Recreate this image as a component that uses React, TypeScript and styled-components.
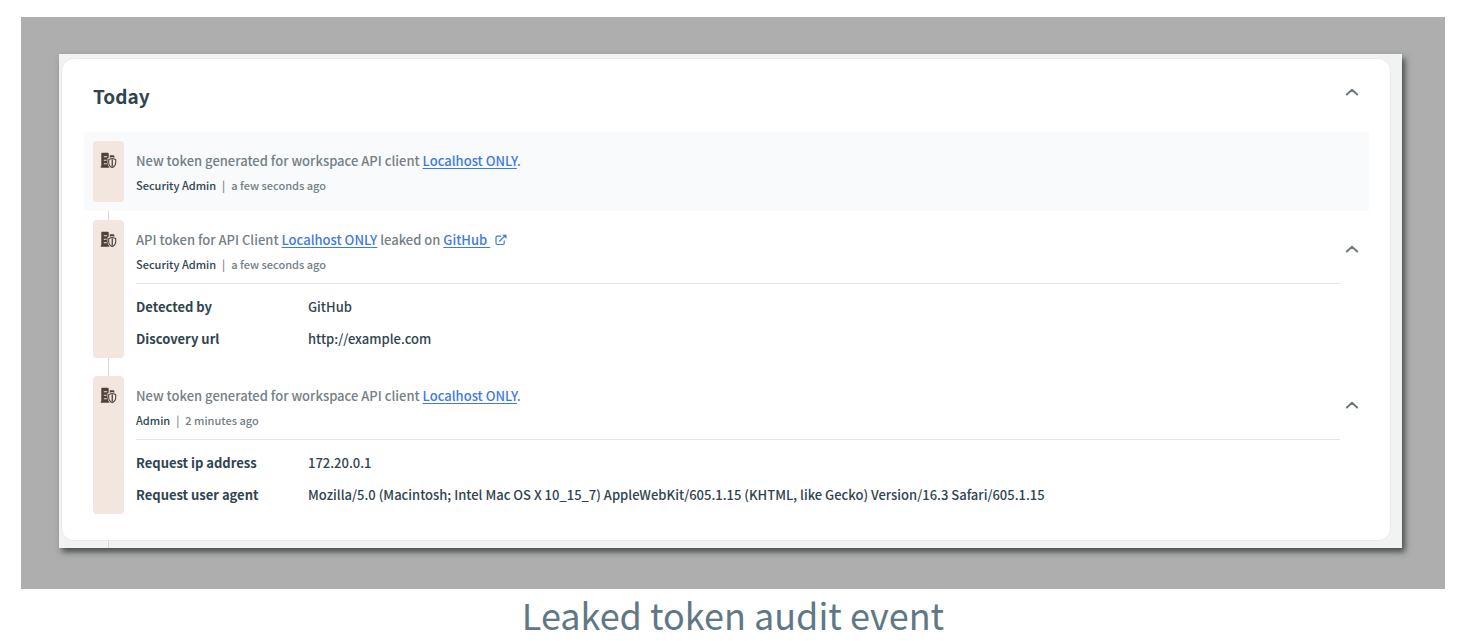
import React from "react";
import styled, { createGlobalStyle } from "styled-components";

const GlobalStyle = createGlobalStyle`
  *, *::before, *::after { box-sizing: border-box; }
  body {
    margin: 0;
    background: #fff;
    color: #2f444e;
    font-family: "Noto Sans CJK SC", "Noto Sans", sans-serif;
  }
`;

const Figure = styled.figure`
  margin: 0;
  padding: 17px 17px 0 21px;
`;

const Backdrop = styled.div`
  background: #aeaeae;
  padding: 37px 43px 41px 38px;
`;

const Panel = styled.div`
  background: #f1f3f3;
  padding: 5px 12px 0 3px;
  box-shadow: 3px 4px 6px rgba(40, 44, 44, 0.75);
`;

const Card = styled.section`
  background: #fff;
  border-radius: 12px;
  padding: 0 21px 17px 22px;
  box-shadow: 0 0 0 1px #e9ebec;
`;

const CardHeader = styled.header`
  display: flex;
  justify-content: space-between;
  align-items: center;
  height: 73px;
  padding: 0 5px 0 9px;
`;

const Heading = styled.h2`
  margin: 0;
  font-size: 19px;
  line-height: 28px;
  font-weight: 700;
`;

const IconButton = styled.button`
  display: flex;
  align-items: center;
  justify-content: center;
  width: 24px;
  height: 24px;
  flex: none;
  padding: 0;
  border: 0;
  background: none;
  color: #6f797d;
  cursor: pointer;
`;

const HeaderToggle = styled(IconButton)`
  margin-bottom: 7px;
`;

const RowToggle = styled(IconButton)`
  margin-top: 26px;
`;

const Events = styled.ol`
  list-style: none;
  margin: 0;
  padding: 0;
`;

const Row = styled.li<{ $active?: boolean }>`
  display: flex;
  padding: 0 5px 0 9px;
  background: ${(p) => (p.$active ? "#f8fafb" : "transparent")};
`;

const Rail = styled.div`
  display: flex;
  flex-direction: column;
  align-items: center;
  width: 31px;
  flex: none;
`;

const Connector = styled.span<{ $visible?: boolean }>`
  width: 1px;
  height: 9px;
  background: ${(p) => (p.$visible ? "#d5d9dc" : "transparent")};
`;

const Marker = styled.div`
  flex: 1;
  width: 100%;
  display: flex;
  justify-content: center;
  align-items: flex-start;
  padding-top: 11px;
  border-radius: 4px;
  background: #f2e6df;
`;

const Body = styled.div<{ $open?: boolean }>`
  flex: 1;
  min-width: 0;
  margin: 9px 0;
  padding: 8px 0 ${(p) => (p.$open ? 3 : 5)}px 12px;
`;

const Title = styled.p`
  margin: 0;
  font-size: 13px;
  font-weight: 500;
  line-height: 24px;
  color: #748086;
`;

const Link = styled.a`
  color: #3f7ae0;
  text-decoration: underline;
  text-underline-offset: 2px;
`;

const ExternalMark = styled.svg`
  margin-left: 5px;
  vertical-align: -1px;
`;

const Meta = styled.p`
  margin: 0;
  font-size: 11px;
  font-weight: 500;
  line-height: 24px;
  color: #748086;
`;

const Actor = styled.span`
  color: #2f444e;
`;

const Divider = styled.span`
  margin: 0 6px;
`;

const Details = styled.dl`
  margin: 7px 0 0;
  padding-top: 7px;
  border-top: 1px solid #e4e7e9;
`;

const Detail = styled.div`
  display: grid;
  grid-template-columns: 172px 1fr;
  font-size: 13px;
  font-weight: 500;
  line-height: 32px;
`;

const Term = styled.dt`
  font-weight: 700;
`;

const Value = styled.dd`
  margin: 0;
`;

const Tail = styled.div`
  height: 8px;
  padding-left: 46px;
`;

const TailLine = styled.div`
  width: 1px;
  height: 100%;
  background: #d5d9dc;
`;

const Caption = styled.figcaption`
  padding: 1px 0 3px;
  text-align: center;
  font-size: 36px;
  line-height: 48px;
  color: #607885;
`;

const Chevron = () => (
  <svg width="14" height="8" viewBox="0 0 14 8" fill="none" aria-hidden="true">
    <path d="M1.800 6.500 7 1.800l5.200 4.700" stroke="currentColor" strokeWidth="2" strokeLinecap="round" strokeLinejoin="round" />
  </svg>
);

const WorkspaceShield = () => (
  <svg width="17" height="17" viewBox="0 0 17 17" aria-hidden="true">
    <path
      fill="#51403a"
      fillRule="evenodd"
      d="M2 .8H7.700Q8.700.8 8.700 1.800V5.800L7.500 6.600V10Q7.500 13.300 9.300 15.200V15.800H.8V14.300H1.300V1.500Q1.300.8 2 .8ZM3.800 4.300V5.300H7.200V4.300ZM3.800 7.800V8.800H6.600V7.800ZM3.800 11.300V12.300H6.800V11.300Z"
    />
    <path fill="#51403a" d="M9.800 3.200H13q1.400 0 1.400 1.400V5.800L12.100 5 9.800 5.700z" />
    <path
      fill="#f2e6df"
      stroke="#51403a"
      strokeWidth="1.100"
      strokeLinejoin="round"
      d="M12.200 6.400 15.700 7.600V10.400Q15.700 13.900 12.200 15.600 8.700 13.900 8.700 10.400V7.600Z"
    />
    <path fill="#51403a" d="M11.600 7.600h1.300v6.800h-1.300z" />
  </svg>
);

const ExternalIcon = () => (
  <ExternalMark width="12" height="12" viewBox="0 0 12 12" fill="none" aria-hidden="true">
    <path
      d="M5.500 2.200H2.200Q1 2.200 1 3.400V9.300Q1 10.500 2.200 10.500H8Q9.200 10.500 9.200 9.300V6.800M4.500 7.200 10.500 1.400"
      stroke="#3f7ae0"
      strokeWidth="1.200"
      strokeLinecap="round"
    />
    <path d="M7.200.7H11.500V5Z" fill="#3f7ae0" />
  </ExternalMark>
);

interface AuditEvent {
  title: React.ReactNode;
  actor: string;
  time: string;
  details?: [string, string][];
}

const events: AuditEvent[] = [
  {
    title: <>New token generated for workspace API client <Link href="#client">Localhost ONLY</Link>.</>,
    actor: "Security Admin",
    time: "a few seconds ago",
  },
  {
    title: (
      <>
        API token for API Client <Link href="#client">Localhost ONLY</Link> leaked on{" "}
        <Link href="#github">GitHub&nbsp;<ExternalIcon /></Link>
      </>
    ),
    actor: "Security Admin",
    time: "a few seconds ago",
    details: [
      ["Detected by", "GitHub"],
      ["Discovery url", "http://example.com"],
    ],
  },
  {
    title: <>New token generated for workspace API client <Link href="#client">Localhost ONLY</Link>.</>,
    actor: "Admin",
    time: "2 minutes ago",
    details: [
      ["Request ip address", "172.20.0.1"],
      [
        "Request user agent",
        "Mozilla/5.0 (Macintosh; Intel Mac OS X 10_15_7) AppleWebKit/605.1.15 (KHTML, like Gecko) Version/16.3 Safari/605.1.15",
      ],
    ],
  },
];

export default function App() {
  return (
    <>
      <GlobalStyle />
      <Figure>
        <Backdrop>
          <Panel>
            <Card>
              <CardHeader>
                <Heading>Today</Heading>
                <HeaderToggle type="button" aria-label="Collapse today"><Chevron /></HeaderToggle>
              </CardHeader>
              <Events>
                {events.map((event, i) => (
                  <Row key={i} $active={i === 0}>
                    <Rail>
                      <Connector $visible={i > 0} />
                      <Marker><WorkspaceShield /></Marker>
                      <Connector $visible={i > 0 && i < events.length - 1} />
                    </Rail>
                    <Body $open={!!event.details}>
                      <Title>{event.title}</Title>
                      <Meta>
                        <Actor>{event.actor}</Actor>
                        <Divider>|</Divider>
                        {event.time}
                      </Meta>
                      {event.details && (
                        <Details>
                          {event.details.map(([term, value]) => (
                            <Detail key={term}>
                              <Term>{term}</Term>
                              <Value>{value}</Value>
                            </Detail>
                          ))}
                        </Details>
                      )}
                    </Body>
                    {event.details && (
                      <RowToggle type="button" aria-label="Collapse event details"><Chevron /></RowToggle>
                    )}
                  </Row>
                ))}
              </Events>
            </Card>
            <Tail><TailLine /></Tail>
          </Panel>
        </Backdrop>
        <Caption>Leaked token audit event</Caption>
      </Figure>
    </>
  );
}
